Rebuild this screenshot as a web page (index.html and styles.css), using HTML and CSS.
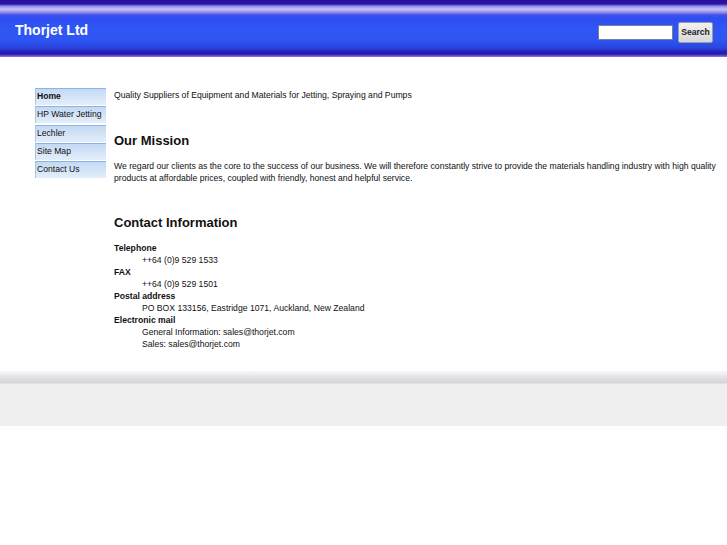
FILE: index.html
```html
<!DOCTYPE html>
<html>
<head>
<meta charset="utf-8">
<title>Thorjet Ltd</title>
<link rel="stylesheet" href="styles.css">
</head>
<body>
<div class="header">
  <div class="brand">Thorjet Ltd</div>
  <form class="search">
    <input class="search-input" type="text">
    <button class="search-btn" type="button">Search</button>
  </form>
</div>
<div class="main">
  <ul class="nav">
    <li class="active">Home</li>
    <li>HP Water Jetting</li>
    <li>Lechler</li>
    <li>Site Map</li>
    <li>Contact Us</li>
  </ul>
  <div class="content">
    <p class="intro">Quality Suppliers of Equipment and Materials for Jetting, Spraying and Pumps</p>
    <h2 class="mission-title">Our Mission</h2>
    <p class="mission">We regard our clients as the core to the success of our business. We will therefore constantly strive to provide the materials handling industry with high quality products at affordable prices, coupled with friendly, honest and helpful service.</p>
    <h2 class="contact-title">Contact Information</h2>
    <dl class="contact">
      <dt>Telephone</dt>
      <dd>++64 (0)9 529 1533</dd>
      <dt>FAX</dt>
      <dd>++64 (0)9 529 1501</dd>
      <dt>Postal address</dt>
      <dd>PO BOX 133156, Eastridge 1071, Auckland, New Zealand</dd>
      <dt>Electronic mail</dt>
      <dd>General Information: sales@thorjet.com</dd>
      <dd>Sales: sales@thorjet.com</dd>
    </dl>
  </div>
</div>
<div class="footer"></div>
</body>
</html>
```
FILE: styles.css
```css
html, body {
  margin: 0;
  padding: 0;
  background: #fff;
  font-family: "Liberation Sans", Arial, sans-serif;
  color: #111;
}
.header {
  height: 57px;
  display: flex;
  align-items: center;
  justify-content: space-between;
  padding: 7px 14px 0 15px;
  box-sizing: border-box;
  background: linear-gradient(to bottom,
    #2a0c9e 0px, #2c14a8 4px,
    #8a86e4 6px, #c6c4f4 9px, #9a96ee 12px, #4450e6 15px,
    #2e4cf2 18px, #3057f4 30px, #2e55f2 40px, #2a44e0 48px,
    #2320b8 52px, #2a1aa8 54px, #6a5cd8 56px, #8a80e0 57px);
}
.brand {
  color: #fff;
  font-weight: bold;
  font-size: 14px;
  margin-top: -5px;
}
.search {
  display: flex;
  align-items: center;
  gap: 5px;
  margin: 0;
}
.search-input {
  width: 75px;
  height: 15px;
  box-sizing: border-box;
  border: 1px solid #7d7d9a;
  border-radius: 1px;
  background: #fff;
  padding: 0;
}
.search-btn {
  width: 35px;
  height: 21px;
  box-sizing: border-box;
  padding: 0;
  border: 1px solid #9a9aa8;
  border-radius: 2px;
  background: linear-gradient(#f2f2f2, #d8d8d8);
  font-family: "Liberation Sans", Arial, sans-serif;
  font-weight: bold;
  font-size: 8.6px;
  color: #222;
}
.main {
  display: flex;
  align-items: flex-start;
  padding: 31px 0 0 35px;
  height: 314px;
  box-sizing: border-box;
}
.nav {
  list-style: none;
  margin: 0;
  padding: 0;
  width: 71px;
  display: flex;
  flex-direction: column;
  gap: 1.3px;
  flex-shrink: 0;
}
.nav li {
  height: 17px;
  box-sizing: border-box;
  border-top: 1px solid #8ab4e4;
  border-left: 1px solid #a6c6ec;
  background: linear-gradient(to bottom, #c3d9f3, #e4eefa);
  font-size: 8.6px;
  line-height: 15px;
  padding-left: 1px;
  color: #111;
  white-space: nowrap;
}
.nav li.active {
  font-weight: bold;
}
.content {
  padding-left: 8px;
  font-size: 8.65px;
  line-height: 12px;
}
.intro {
  margin: 1px 0 0;
}
.mission-title, .contact-title {
  font-size: 13px;
  font-weight: bold;
  line-height: 16px;
  margin: 0;
}
.mission-title {
  margin-top: 32px;
}
.mission {
  margin: 11px 0 0;
}
.contact-title {
  margin-top: 31px;
}
.contact {
  margin: 11px 0 0;
}
.contact dt {
  font-weight: bold;
}
.contact dd {
  margin-left: 28px;
}
.footer {
  height: 55px;
  background: linear-gradient(to bottom,
    #f4f8fc 0px, #eceef2 3px, #e2e2e4 6px, #dadadc 10px, #d4d2d4 12px, #efefef 13px, #efefef 100%);
}
```
